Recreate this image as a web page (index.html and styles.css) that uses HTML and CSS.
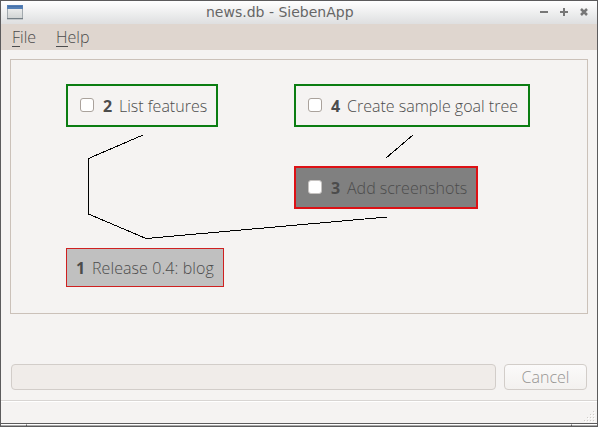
FILE: index.html
```html
<!DOCTYPE html>
<html lang="en">
<head>
<meta charset="utf-8">
<title>news.db - SiebenApp</title>
<link rel="stylesheet" href="styles.css">
</head>
<body>
<div class="window">
  <header class="titlebar">
    <svg class="app-icon" width="16" height="16" viewBox="0 0 16 16">
      <defs>
        <linearGradient id="pane" x1="0" y1="0" x2="0" y2="1"><stop offset="0" stop-color="#f4f4f4"/><stop offset="1" stop-color="#cfd2d2"/></linearGradient>
      </defs>
      <rect x=".5" y=".5" width="15" height="13.5" fill="url(#pane)" stroke="#a2a9ae"/>
      <rect x="0" y="0" width="16" height="4" fill="#5580b6"/>
      <path d="M1 1.5h14" stroke="#4671aa"/>
      <path d="M0 13.500h16" stroke="#757f86"/>
    </svg>
    <span class="title">news.db - SiebenApp</span>
    <svg class="controls" width="50" height="10" viewBox="0 0 50 10">
      <path d="M1 5h8M21 5h8M25 1v8" stroke="#777" stroke-width="2"/>
      <path d="M42 2l6 6M48 2l-6 6" stroke="#777" stroke-width="2.5"/>
    </svg>
  </header>
  <nav class="menubar">
    <span class="menu file"><span class="key">F</span>ile</span>
    <span class="menu help"><span class="key">H</span>elp</span>
  </nav>
  <main class="canvas">
    <svg class="edges" width="576" height="253" viewBox="11 60 576 253" shape-rendering="crispEdges">
      <path d="M143 135L88.5 158.500V214L146 238.500L387 217M413 135L386 158" fill="none" stroke="#000"/>
    </svg>
    <div class="goal open n2"><i class="check"></i><b>2</b><span>List features</span></div>
    <div class="goal open n4"><i class="check"></i><b>4</b><span>Create sample goal tree</span></div>
    <div class="goal selected n3"><i class="check"></i><b>3</b><span>Add screenshots</span></div>
    <div class="goal previous n1"><b>1</b><span>Release 0.4: blog</span></div>
  </main>
  <section class="actions">
    <div class="field"></div>
    <button class="cancel" disabled>Cancel</button>
  </section>
  <footer class="statusbar">
    <svg width="12" height="12" viewBox="0 0 12 12" shape-rendering="crispEdges">
      <path d="M9 1.500h3M6 4.500h6M3 7.500h9M0 10.500h12" stroke="#cfccc9" stroke-dasharray="1 2"/>
      <path d="M10 2.500h2M7 5.500h5M4 8.500h8M1 11.500h11" stroke="#fff" stroke-dasharray="1 2"/>
    </svg>
  </footer>
  <div class="resize"><i></i><i></i><i></i></div>
</div>
</body>
</html>
```
FILE: styles.css
```css
* { box-sizing: border-box; }
body { margin: 0; }
.window {
  width: 598px;
  height: 427px;
  display: flex;
  flex-direction: column;
  border: 1px solid #5c5b5c;
  background: #f5f3f2;
  color: #4c4c4c;
  font: 300 16px/20px "Open Sans", "Noto Sans", sans-serif;
  white-space: nowrap;
  overflow: hidden;
}
.titlebar {
  height: 23px;
  flex: none;
  display: flex;
  align-items: center;
  padding: 0 8px 1px 6px;
  background: linear-gradient(#fff, #dedfe0);
}
.app-icon { margin-top: 2px; }
.title {
  flex: 1;
  padding-left: 183px;
  font: 400 14px/22px "DejaVu Sans", sans-serif;
  color: #666;
}
.menubar {
  height: 26px;
  flex: none;
  display: flex;
  gap: 19px;
  padding: 3px 11px;
  background: #dfd6cf;
}
.key { border-bottom: 1px solid #4c4c4c; display: inline-block; height: 20px; }
.file { width: 25px; }
.canvas {
  position: relative;
  flex: none;
  height: 255px;
  margin: 9px 9px 0;
  border: 1px solid #cbc1b9;
}
.edges { display: block; }
.goal {
  position: absolute;
  display: flex;
  align-items: center;
  height: 43px;
  padding: 0 0 0 12px;
}
.goal b { font-weight: 700; width: 10px; margin-right: 6px; }
.open { border: 2px solid #0b7d12; }
.selected { border: 2px solid #dd1115; background: #808080; }
.previous { border: 1px solid #cf2020; background: #c0c0c0; }
.n2 { left: 55px; top: 24px; width: 152px; }
.n4 { left: 283px; top: 24px; width: 236px; }
.n3 { left: 283px; top: 106px; width: 184px; }
.n1 { left: 55px; top: 188px; width: 158px; height: 39px; padding-left: 9px; }
.n1 span { letter-spacing: .08px; }
.check {
  width: 14px;
  height: 14px;
  margin: 0 9px 2px 0;
  border: 1px solid #aaa29c;
  border-radius: 3px;
  background: #fff;
}
.selected .check { border-color: #c5c2c0; }
.actions {
  flex: none;
  display: flex;
  gap: 8px;
  height: 26px;
  margin: 50px 10px 0;
}
.field {
  width: 485px;
  border: 1px solid #d2cdc9;
  border-radius: 4px;
  background: #f0ece9;
}
.cancel {
  width: 83px;
  padding: 0;
  border: 1px solid #d2cdc9;
  border-radius: 4px;
  background: linear-gradient(#fbfafa, #f3f1ef);
  color: #969492;
  font: inherit;
}
.statusbar {
  display: flex;
  justify-content: flex-end;
  align-items: flex-end;
  height: 23px;
  flex: none;
  margin-top: 10px;
  padding: 0 1px 1px 0;
  border-top: 1px solid #d8d5d3;
  box-shadow: inset 0 1px #fff;
}
.resize {
  display: flex;
  height: 3px;
  border-top: 1px solid #5c5b5c;
}
.resize i { width: 25px; border-top: 1px solid #fff; background: #aaa; }
.resize i:nth-child(2) { flex: 1; border-left: 1px solid #5c5b5c; border-right: 1px solid #5c5b5c; }
```
